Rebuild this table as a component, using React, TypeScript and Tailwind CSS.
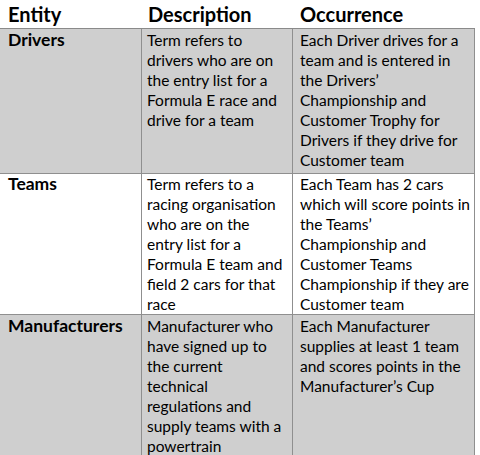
import React from "react";

type Row = { entity: string; desc: string[]; occ: string[]; gray: boolean; h: string; pt: string };

const rows: Row[] = [
  {
    entity: "Drivers",
    desc: ["Term refers to", "drivers who are on", "the entry list for a", "Formula E race and", "drive for a team"],
    occ: [
      "Each Driver drives for a",
      "team and is entered in",
      "the Drivers\u2019",
      "Championship and",
      "Customer Trophy for",
      "Drivers if they drive for",
      "Customer team",
    ],
    gray: true,
    h: "h-[145px]",
    pt: "pt-[1px]",
  },
  {
    entity: "Teams",
    desc: [
      "Term refers to a",
      "racing organisation",
      "who are on the",
      "entry list for a",
      "Formula E team and",
      "field 2 cars for that",
      "race",
    ],
    occ: [
      "Each Team has 2 cars",
      "which will score points in",
      "the Teams\u2019",
      "Championship and",
      "Customer Teams",
      "Championship if they are",
      "Customer team",
    ],
    gray: false,
    h: "h-[141px]",
    pt: "pt-0",
  },
  {
    entity: "Manufacturers",
    desc: [
      "Manufacturer who",
      "have signed up to",
      "the current",
      "technical",
      "regulations and",
      "supply teams with a",
      "powertrain",
    ],
    occ: ["Each Manufacturer", "supplies at least 1 team", "and scores points in the", "Manufacturer\u2019s Cup"],
    gray: true,
    h: "h-[145px]",
    pt: "pt-[1px]",
  },
];

function Lines({ lines }: { lines: string[] }) {
  return (
    <>
      {lines.map((l, i) => (
        <div key={i} className="whitespace-nowrap">
          {l}
        </div>
      ))}
    </>
  );
}

export default function App() {
  return (
    <div
      className="w-[480px] h-[455px] overflow-hidden bg-white text-black"
      style={{ fontFamily: "Lato, 'Open Sans', sans-serif" }}
    >
      <div className="grid grid-cols-[142px_151px_182px]">
        <div className="h-[29px] border-b border-[#8a8a8a] pl-[8px] text-[20px] font-bold leading-[28px]">Entity</div>
        <div className="h-[29px] border-b border-[#8a8a8a] pl-[6px] text-[20px] font-bold leading-[28px]">Description</div>
        <div className="h-[29px] border-b border-[#8a8a8a] pl-[7px] text-[20px] font-bold leading-[28px]">Occurrence</div>
        {rows.map((r) => {
          const bg = r.gray ? "bg-[#cfcfcf]" : "bg-white";
          return (
            <React.Fragment key={r.entity}>
              <div
                className={`${r.h} ${bg} ${r.pt} border-r border-b border-[#8f8f8f] pl-[8px] text-[17.5px] font-bold leading-[20px]`}
              >
                {r.entity}
              </div>
              <div className={`${r.h} ${bg} ${r.pt} border-r border-b border-[#8f8f8f] pl-[5px] text-[15.5px] leading-[20px]`}>
                <Lines lines={r.desc} />
              </div>
              <div className={`${r.h} ${bg} ${r.pt} border-r border-b border-[#8f8f8f] pl-[7px] text-[15.5px] leading-[20px]`}>
                <Lines lines={r.occ} />
              </div>
            </React.Fragment>
          );
        })}
      </div>
    </div>
  );
}
